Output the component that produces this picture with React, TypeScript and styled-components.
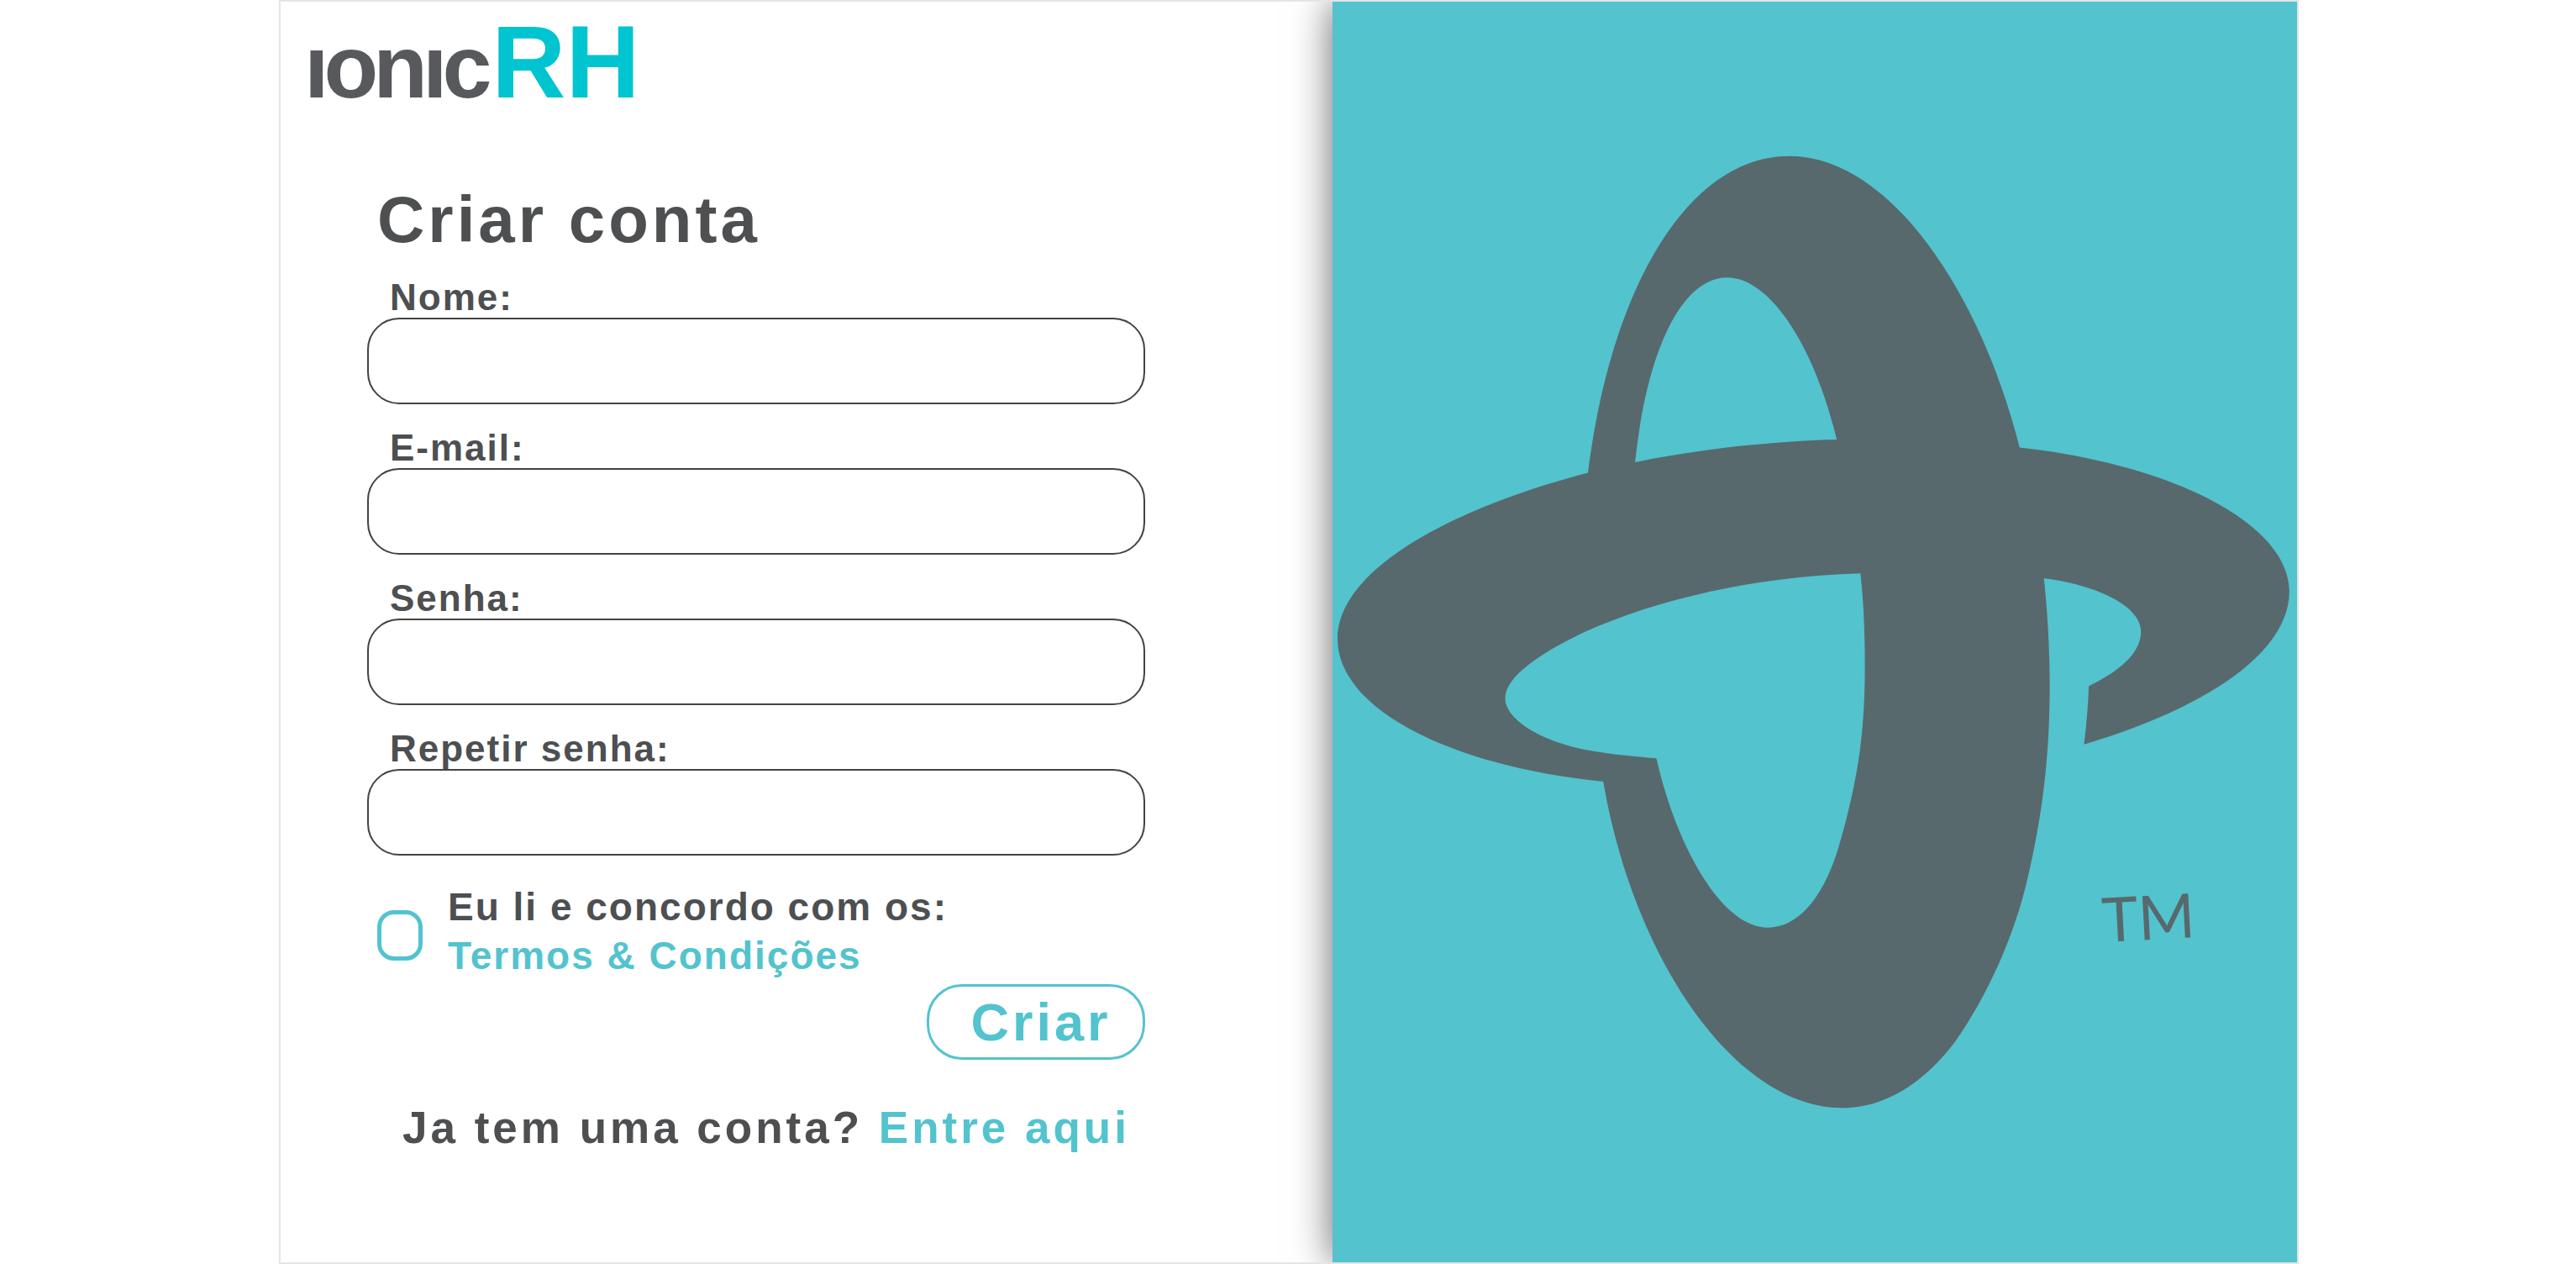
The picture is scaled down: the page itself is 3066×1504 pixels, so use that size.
import React from "react";
import styled, { createGlobalStyle } from "styled-components";

const ink = "#4d4f51";
const teal = "#53c3ce";

const GlobalStyle = createGlobalStyle`
  *, *::before, *::after { box-sizing: border-box; }
  body {
    margin: 0;
    background: #fff;
    color: ${ink};
    font-family: "Liberation Sans", Arial, Helvetica, sans-serif;
    font-weight: 700;
  }
`;

const Page = styled.div`
  min-height: 100vh;
  display: flex;
  padding: 0 330px 0 332px;
`;

const Card = styled.main`
  flex: 1;
  display: grid;
  grid-template-columns: 1252fr 1148fr;
  border: 2px solid #e5e5e5;
  overflow: hidden;
`;

const SignUp = styled.section`
  display: flex;
  flex-direction: column;
`;

const Brand = styled.header`
  display: flex;
  align-items: baseline;
  gap: 6px;
  padding: 9px 28px 0;
  line-height: 126px;
`;

const BrandName = styled.span`
  font-size: 106px;
  letter-spacing: -6px;
  color: #57595c;
`;

const BrandSuffix = styled.span`
  font-size: 122px;
  color: #00c4d0;
`;

const Form = styled.form`
  display: flex;
  flex-direction: column;
  margin: 74px 223px 0 103px;
`;

const Title = styled.h1`
  margin: 0 0 20px;
  padding-left: 12px;
  font-size: 78px;
  line-height: 90px;
  letter-spacing: 4px;
`;

const Fields = styled.div`
  display: flex;
  flex-direction: column;
  gap: 24px;
`;

const Field = styled.div`
  display: flex;
  flex-direction: column;
`;

const FieldLabel = styled.label`
  padding: 4px 0 0 27px;
  font-size: 44px;
  line-height: 48px;
  letter-spacing: 2px;
`;

const TextInput = styled.input`
  width: 100%;
  height: 103px;
  padding: 0 36px;
  border: 2px solid #444244;
  border-radius: 38px;
  background: #fff;
  color: ${ink};
  font: inherit;
  font-size: 44px;
`;

const Consent = styled.div`
  display: flex;
  align-items: center;
  gap: 30px;
  margin-top: 32px;
  padding-left: 12px;
`;

const CheckBox = styled.input`
  appearance: none;
  flex: none;
  width: 54px;
  height: 60px;
  margin: 10px 0 0;
  border: 5px solid ${teal};
  border-radius: 20px;
  background: #fff;

  &:checked {
    background: ${teal};
  }
`;

const ConsentText = styled.div`
  display: flex;
  flex-direction: column;
  align-items: flex-start;
  font-size: 46px;
  line-height: 58px;
  letter-spacing: 2px;
`;

const TealLink = styled.a`
  color: ${teal};
  text-decoration: none;
`;

const SubmitButton = styled.button`
  align-self: flex-end;
  width: 260px;
  height: 90px;
  margin-top: 5px;
  padding: 0 0 0 12px;
  border: 3px solid ${teal};
  border-radius: 42px;
  background: #fff;
  color: ${teal};
  font: inherit;
  font-size: 63px;
  letter-spacing: 4px;
  cursor: pointer;
`;

const SignInHint = styled.p`
  margin: 51px 0 0;
  padding-left: 42px;
  font-size: 53px;
  line-height: 60px;
  letter-spacing: 4px;
  white-space: nowrap;
`;

const Artwork = styled.section`
  background: ${teal};
  box-shadow: 0 0 44px rgba(0, 0, 0, 0.6);
`;

const Mark = styled.svg`
  display: block;
  width: 100%;
  height: auto;
  fill: #57696d;
`;

const MarkText = styled.text`
  font-family: Lato, sans-serif;
  font-size: 73px;
  font-weight: 400;
`;

const fields = [
  { id: "nome", label: "Nome:", type: "text" },
  { id: "email", label: "E-mail:", type: "email" },
  { id: "senha", label: "Senha:", type: "password" },
  { id: "repetir-senha", label: "Repetir senha:", type: "password" },
];

// Two interlocking rings; the counters are cut out with the even-odd rule.
const rings = [
  "M1890 562.5C1918 340 2010 185.7 2129.8 185.7C2250 185.7 2358 350 2403.7 532.4",
  "C2590 553 2724.8 625 2724.8 703.5C2724.8 775 2630 841 2480.4 885.8",
  "Q2485 850 2486.1 816.2C2524 798 2548.2 776 2548.2 752C2548.2 722 2500 697 2432.7 688",
  "C2437 728 2439.6 772 2439.6 815C2439.6 900 2431 970 2412.9 1046.7",
  "C2397 1115 2365 1185 2328 1238C2288 1292 2240 1318.3 2192.7 1318.3",
  "C2065 1318.3 1944 1140 1908.2 930C1730 912 1592 845 1592 760C1592 680 1720 607 1890 562.5Z",
  "M1946.1 550C1961 412 2003 330.3 2055.9 330.3C2108 330.3 2161 416 2186.1 523",
  "C2105 525 2020 535 1946.1 550Z",
  "M2214.3 682.2C2090 686 1975 712 1885.3 752.3C1825 781 1791.5 808 1791.5 831",
  "C1791.5 857 1839 886 1904.4 895Q1930 899 1971.4 902.3",
  "C1996 1010 2050 1103.7 2104.1 1103.7C2143 1103.7 2174 1062 2190.6 1000",
  "Q2200 968 2206.9 933.3C2217 885 2219.6 838 2219.6 792.5C2219.6 750 2218 715 2214.3 682.2Z",
].join("");

export default function App() {
  return (
    <>
      <GlobalStyle />
      <Page>
        <Card>
          <SignUp>
            <Brand>
              <BrandName>ıonıc</BrandName>
              <BrandSuffix>RH</BrandSuffix>
            </Brand>
            <Form onSubmit={(event) => event.preventDefault()}>
              <Title>Criar conta</Title>
              <Fields>
                {fields.map(({ id, label, type }) => (
                  <Field key={id}>
                    <FieldLabel htmlFor={id}>{label}</FieldLabel>
                    <TextInput id={id} name={id} type={type} />
                  </Field>
                ))}
              </Fields>
              <Consent>
                <CheckBox id="termos" name="termos" type="checkbox" />
                <ConsentText>
                  <label htmlFor="termos">Eu li e concordo com os:</label>
                  <TealLink href="#termos">Termos &amp; Condições</TealLink>
                </ConsentText>
              </Consent>
              <SubmitButton type="submit">Criar</SubmitButton>
              <SignInHint>
                Ja tem uma conta? <TealLink href="#entrar">Entre aqui</TealLink>
              </SignInHint>
            </Form>
          </SignUp>
          <Artwork>
            <Mark viewBox="1586 2 1148 1500" role="img" aria-label="ionicRH">
              <path fillRule="evenodd" d={rings} />
              <MarkText x="2503" y="1121" transform="rotate(-3 2503 1121)">TM</MarkText>
            </Mark>
          </Artwork>
        </Card>
      </Page>
    </>
  );
}
